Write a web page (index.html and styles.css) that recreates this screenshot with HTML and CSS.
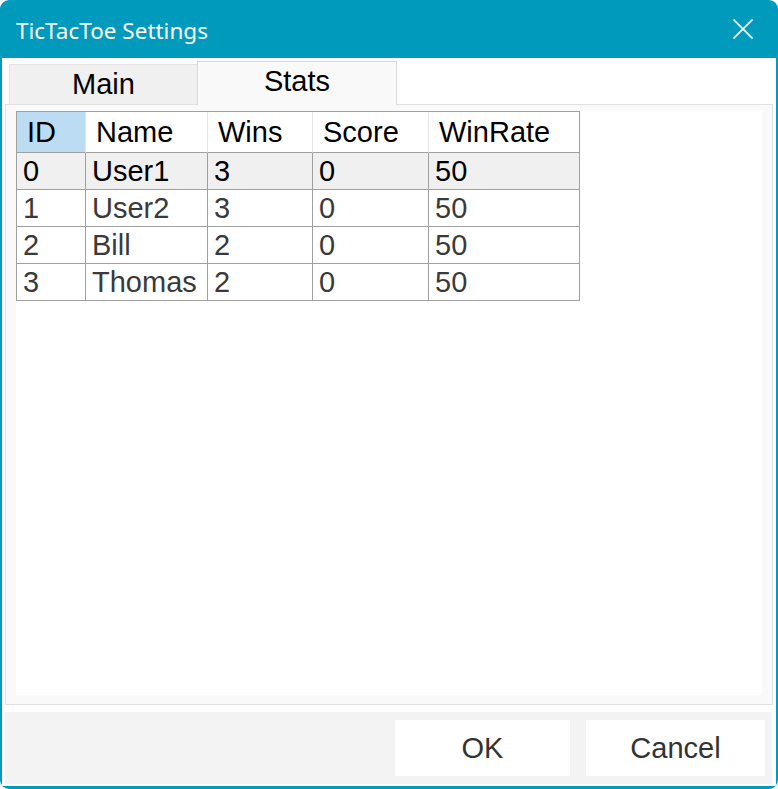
FILE: index.html
```html
<!DOCTYPE html>
<html>
<head>
<meta charset="utf-8">
<link rel="stylesheet" href="styles.css">
</head>
<body>
<div class="window">
  <div class="titlebar">
    <span class="title">TicTacToe Settings</span>
    <svg class="close" width="20" height="20" viewBox="0 0 20 20"><path d="M0.5 0.5 L19.5 19.5 M19.5 0.5 L0.5 19.5" stroke="#ffffff" stroke-width="1.6" fill="none"/></svg>
  </div>
  <div class="content">
    <div class="tabs">
      <div class="tab">Main</div>
      <div class="tab active">Stats</div>
    </div>
    <div class="panel">
      <div class="grid">
        <table class="stats">
          <colgroup>
            <col class="c1"><col class="c2"><col class="c3"><col class="c4"><col class="c5">
          </colgroup>
          <thead>
            <tr><th class="sel">ID</th><th>Name</th><th>Wins</th><th>Score</th><th>WinRate</th></tr>
          </thead>
          <tbody>
            <tr class="current"><td>0</td><td>User1</td><td>3</td><td>0</td><td>50</td></tr>
            <tr><td>1</td><td>User2</td><td>3</td><td>0</td><td>50</td></tr>
            <tr><td>2</td><td>Bill</td><td>2</td><td>0</td><td>50</td></tr>
            <tr><td>3</td><td>Thomas</td><td>2</td><td>0</td><td>50</td></tr>
          </tbody>
        </table>
      </div>
    </div>
    <div class="footer">
      <button class="btn ok">OK</button>
      <button class="btn cancel">Cancel</button>
    </div>
  </div>
</div>
</body>
</html>
```
FILE: styles.css
```css
html, body {
  margin: 0;
  padding: 0;
  background: #ffffff;
}
.window {
  width: 778px;
  height: 789px;
  box-sizing: border-box;
  background: #009abd;
  border-radius: 9px;
  padding: 0 2px 3px 2px;
  display: flex;
  flex-direction: column;
  overflow: hidden;
}
.titlebar {
  height: 58px;
  flex: none;
  display: flex;
  align-items: center;
  justify-content: space-between;
  padding: 0 23px 0 14px;
}
.title {
  font-family: "Noto Sans", "Open Sans", sans-serif;
  font-size: 22.5px;
  color: #ffffff;
  margin-top: 2px;
}
.close {
  display: block;
}
.content {
  flex: 1;
  background: #ffffff;
  display: flex;
  flex-direction: column;
  padding: 3px 3px 2px 3px;
  font-family: "Liberation Sans", Arial, sans-serif;
  font-size: 29px;
}
.tabs {
  display: flex;
  align-items: flex-end;
  padding-left: 4px;
  height: 43px;
  position: relative;
  z-index: 1;
}
.tab {
  box-sizing: border-box;
  height: 40px;
  width: 188px;
  background: #f0f0f0;
  border: 1px solid #e3e3e3;
  border-right: none;
  border-bottom: none;
  text-align: center;
  line-height: 32px;
  padding-top: 3px;
  color: #000;
}
.tab.active {
  height: 44px;
  width: 200px;
  background: #f9f9f9;
  border: 1px solid #dadada;
  border-bottom: none;
  margin-bottom: -1px;
}
.panel {
  height: 601px;
  box-sizing: border-box;
  background: #f9f9f9;
  border: 1px solid #e0e0e0;
  padding: 6px 10px 9px 10px;
}
.grid {
  background: #ffffff;
  height: 100%;
}
.stats {
  border-collapse: separate;
  border-spacing: 0;
  table-layout: fixed;
  width: 564px;
  border-top: 1px solid #a0a0a0;
  border-left: 1px solid #a0a0a0;
}
.c1 { width: 69px; }
.c2 { width: 122px; }
.c3 { width: 105px; }
.c4 { width: 116px; }
.c5 { width: 151px; }
.stats th, .stats td {
  box-sizing: border-box;
  text-align: left;
  font-weight: normal;
  line-height: 32px;
  white-space: nowrap;
  overflow: hidden;
}
.stats th {
  height: 41px;
  padding: 0 0 0 10px;
  color: #000;
  border-right: 1px solid #e5e5e5;
  border-bottom: 1px solid #a0a0a0;
  background: #ffffff;
}
.stats th:last-child {
  border-right: 1px solid #a0a0a0;
}
.stats th.sel {
  background: #bcdcf4;
}
.stats td {
  height: 37px;
  padding: 0 0 0 6px;
  color: #3a3a3a;
  border-right: 1px solid #a0a0a0;
  border-bottom: 1px solid #a0a0a0;
}
.stats tr.current td {
  background: #f0f0f0;
  color: #000;
}
.footer {
  margin-top: 7px;
  height: 72px;
  box-sizing: border-box;
  background: #f3f3f3;
  display: flex;
  justify-content: flex-end;
  align-items: center;
  gap: 16px;
  padding-right: 7px;
  margin-right: 1px;
}
.btn {
  height: 56px;
  border: none;
  background: #ffffff;
  font-family: "Liberation Sans", Arial, sans-serif;
  font-size: 29px;
  color: #333333;
  padding: 0;
  margin: 0;
}
.btn.ok { width: 175px; }
.btn.cancel { width: 179px; }
```
